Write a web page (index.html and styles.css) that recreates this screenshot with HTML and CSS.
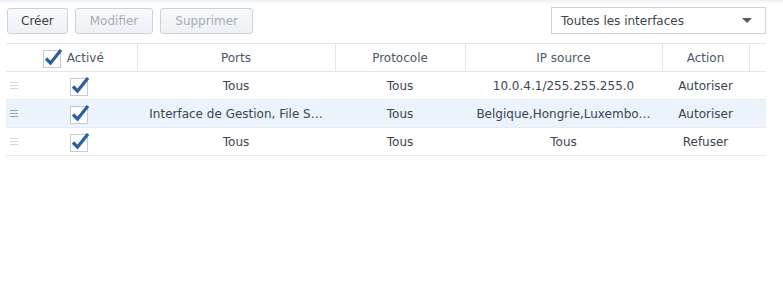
FILE: index.html
```html
<!DOCTYPE html>
<html>
  <head>
    <link rel="stylesheet" href="styles.css">
  </head>
  <body>
    <div class="toolbar">
      <button class="btn">Créer</button>
      <button class="btn" disabled>Modifier</button>
      <button class="btn" disabled>Supprimer</button>
      <div class="spacer"></div>
      <div class="select">
        <span>Toutes les interfaces</span>
        <span class="arrow"></span>
      </div>
    </div>

    <table class="rules">
      <colgroup>
        <col style="width:131px">
        <col style="width:198px">
        <col style="width:130px">
        <col style="width:197px">
        <col style="width:87px">
        <col style="width:17px">
      </colgroup>
      <thead>
        <tr>
          <th>
            <div class="head-check">
              <svg class="check" viewBox="0 0 20 20" width="20" height="20"><rect x="1.5" y="2.5" width="17" height="17" fill="#fff" stroke="#c3ccd6"/><path d="M4 10.5 L8.5 15 L19 2" fill="none" stroke="#2e5f97" stroke-width="3.2"/></svg>
              <span>Activé</span>
            </div>
          </th>
          <th>Ports</th>
          <th>Protocole</th>
          <th>IP source</th>
          <th>Action</th>
          <th></th>
        </tr>
      </thead>
      <tbody>
        <tr>
          <td>
            <div class="first-cell">
              <span class="handle"></span>
              <div class="check-wrap"><svg class="check" viewBox="0 0 20 20" width="20" height="20"><rect x="1.5" y="2.5" width="17" height="17" fill="#fff" stroke="#c3ccd6"/><path d="M4 10.5 L8.5 15 L19 2" fill="none" stroke="#2e5f97" stroke-width="3.2"/></svg></div>
            </div>
          </td>
          <td>Tous</td>
          <td>Tous</td>
          <td>10.0.4.1/255.255.255.0</td>
          <td>Autoriser</td>
          <td></td>
        </tr>
        <tr class="hover">
          <td>
            <div class="first-cell">
              <span class="handle"></span>
              <div class="check-wrap"><svg class="check" viewBox="0 0 20 20" width="20" height="20"><rect x="1.5" y="2.5" width="17" height="17" fill="#fff" stroke="#c3ccd6"/><path d="M4 10.5 L8.5 15 L19 2" fill="none" stroke="#2e5f97" stroke-width="3.2"/></svg></div>
            </div>
          </td>
          <td>Interface de Gestion, File S…</td>
          <td>Tous</td>
          <td>Belgique,Hongrie,Luxembo…</td>
          <td>Autoriser</td>
          <td></td>
        </tr>
        <tr>
          <td>
            <div class="first-cell">
              <span class="handle"></span>
              <div class="check-wrap"><svg class="check" viewBox="0 0 20 20" width="20" height="20"><rect x="1.5" y="2.5" width="17" height="17" fill="#fff" stroke="#c3ccd6"/><path d="M4 10.5 L8.5 15 L19 2" fill="none" stroke="#2e5f97" stroke-width="3.2"/></svg></div>
            </div>
          </td>
          <td>Tous</td>
          <td>Tous</td>
          <td>Tous</td>
          <td>Refuser</td>
          <td></td>
        </tr>
      </tbody>
    </table>
  </body>
</html>
```

FILE: styles.css
```css
* {
  box-sizing: border-box;
  font-family: 'DejaVu Sans', Verdana, sans-serif;
}

html, body {
  margin: 0;
  background: #fff;
}

body {
  width: 783px;
  height: 296px;
  background: linear-gradient(to bottom, #eceff2 0px, #fff 4px);
}

.toolbar {
  display: flex;
  align-items: flex-start;
  padding: 7px 17px 0 7px;
  height: 43px;
}

.btn {
  height: 26px;
  margin: 1px 7px 0 0;
  padding: 0 13px;
  border: 1px solid #c9d3dd;
  border-radius: 3px;
  background: linear-gradient(to bottom, #f8fafc, #edf1f5);
  color: #3a3f45;
  font-size: 12px;
}

.btn:disabled {
  padding: 0 14px;
  color: #a3adb8;
}

.spacer {
  flex: 1;
}

.select {
  width: 215px;
  height: 27px;
  display: flex;
  align-items: center;
  justify-content: space-between;
  padding: 0 13px 0 9px;
  border: 1px solid #c9d3dd;
  background: #fff;
  color: #3a4550;
  font-size: 12px;
}

.select .arrow {
  width: 0;
  height: 0;
  border-left: 5px solid transparent;
  border-right: 5px solid transparent;
  border-top: 5px solid #555b62;
}

.rules {
  margin-left: 6px;
  width: 760px;
  table-layout: fixed;
  border-collapse: collapse;
  font-size: 12px;
  color: #3c4550;
}

.rules th {
  height: 28px;
  padding: 0;
  font-weight: normal;
  color: #4a5868;
  border-top: 1px solid #e1e7ed;
  border-bottom: 1px solid #e1e7ed;
  border-left: 1px solid #e1e7ed;
  text-align: center;
}

.rules th:first-child {
  border-left: none;
}

.rules td {
  height: 28px;
  padding: 0 6px;
  text-align: center;
  border-bottom: 1px solid #e6ebf0;
  white-space: nowrap;
}

.rules td:first-child {
  padding: 0;
}

.rules tr.hover td {
  background: #ebf3fd;
}

.head-check {
  display: flex;
  align-items: center;
  justify-content: center;
  gap: 5px;
  padding-left: 3px;
}

.check {
  display: block;
}

.first-cell {
  display: flex;
  align-items: center;
  padding-left: 4px;
}

.check-wrap {
  flex: 1;
  display: flex;
  justify-content: center;
  padding-left: 2px;
}

.handle {
  width: 8px;
  height: 7px;
  border-top: 1px solid #d3d8de;
  border-bottom: 1px solid #d3d8de;
  position: relative;
}

.handle::after {
  content: '';
  position: absolute;
  left: 0;
  right: 0;
  top: 2px;
  border-top: 1px solid #d3d8de;
}

.hover .handle, .hover .handle::after {
  border-color: #9aa3ad;
}
```
